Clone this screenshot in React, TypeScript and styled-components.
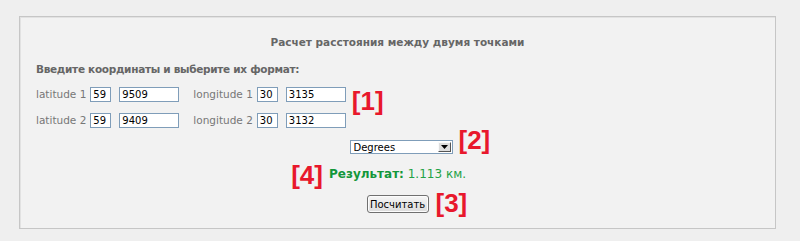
import React from 'react';
import styled, { createGlobalStyle } from 'styled-components';

const GlobalStyle = createGlobalStyle`
  body {
    margin: 0;
    background: #efefef;
    font-family: "DejaVu Sans", Verdana, sans-serif;
  }
`;

const Page = styled.div`
  padding: 16px 0 0 19px;
`;

const Panel = styled.div`
  box-sizing: border-box;
  width: 757px;
  height: 213px;
  border: 1px solid #c6c6c6;
  box-shadow: inset 1px 1px 0 #e2e2e2;
  background: #f2f2f2;
  padding: 18px 16px 0 16px;
  display: flex;
  flex-direction: column;
`;

const Title = styled.div`
  text-align: center;
  font-size: 10.5px;
  line-height: 14px;
  font-weight: bold;
  color: #666;
`;

const Heading = styled.div`
  margin-top: 13px;
  font-size: 10.5px;
  letter-spacing: -0.3px;
  line-height: 14px;
  font-weight: bold;
  color: #666;
`;

const Coords = styled.div`
  position: relative;
  align-self: flex-start;
  margin-top: 10px;
  display: flex;
  flex-direction: column;
  gap: 10px;
`;

const CoordRow = styled.div`
  display: flex;
  align-items: center;
  height: 16px;
`;

const Label = styled.span<{ $gap?: number }>`
  font-size: 10.5px;
  color: #777;
  margin-left: ${(p) => p.$gap ?? 0}px;
  margin-right: 4px;
  white-space: nowrap;
`;

const Field = styled.input<{ $w: number }>`
  box-sizing: border-box;
  width: ${(p) => p.$w}px;
  height: 15px;
  margin: 0 8px 0 0;
  padding: 0 2px;
  border: 1px solid #7f9db9;
  background: #fff;
  font-family: "DejaVu Sans", Verdana, sans-serif;
  font-size: 10px;
  color: #000;
  outline: none;
  &:last-child {
    margin-right: 0;
  }
`;

const CenterRow = styled.div<{ $top: number; $shift?: number }>`
  display: flex;
  justify-content: center;
  margin-top: ${(p) => p.$top}px;
  padding-left: ${(p) => p.$shift ?? 0}px;
`;

const Anchor = styled.div`
  position: relative;
  display: flex;
  align-items: center;
`;

const Mark = styled.span<{ $side: 'left' | 'right'; $gap: number; $top: number }>`
  position: absolute;
  top: ${(p) => p.$top}px;
  ${(p) => (p.$side === 'right' ? 'left' : 'right')}: calc(100% + ${(p) => p.$gap}px);
  font-family: "Liberation Sans", Arial, sans-serif;
  font-weight: bold;
  font-size: 26px;
  line-height: 26px;
  color: #e8182c;
  white-space: nowrap;
`;

const SelectBox = styled.div`
  box-sizing: border-box;
  width: 103px;
  height: 14px;
  border: 1px solid #7f9db9;
  background: #fff;
  display: flex;
  align-items: center;
  padding: 0 1px 0 3px;
  font-size: 10px;
  color: #000;
`;

const SelectArrow = styled.span`
  box-sizing: border-box;
  margin-left: auto;
  width: 13px;
  height: 10px;
  background: #dedede;
  border: 1px solid;
  border-color: #fafafa #555 #555 #fafafa;
  display: flex;
  align-items: center;
  justify-content: center;
`;

const Result = styled.div`
  font-size: 12px;
  line-height: 16px;
  color: #22a245;
  white-space: nowrap;
`;

const ResultLabel = styled.b`
  color: #12973a;
`;

const CalcButton = styled.button`
  box-sizing: border-box;
  width: 62px;
  height: 18px;
  padding: 0;
  border: 1px solid #707070;
  border-radius: 3px;
  background: linear-gradient(#f6f6f6, #dcdcdc);
  box-shadow: inset 0 0 0 1px #fcfcfc;
  font-family: "DejaVu Sans", Verdana, sans-serif;
  font-size: 10px;
  color: #000;
`;

const points = [
  { n: 1, lat: ['59', '9509'], lon: ['30', '3135'] },
  { n: 2, lat: ['59', '9409'], lon: ['30', '3132'] },
];

export default function App() {
  return (
    <>
      <GlobalStyle />
      <Page>
        <Panel>
          <Title>Расчет расстояния между двумя точками</Title>
          <Heading>Введите координаты и выберите их формат:</Heading>
          <Coords>
            {points.map((p) => (
              <CoordRow key={p.n}>
                <Label>latitude {p.n}</Label>
                <Field $w={21} defaultValue={p.lat[0]} />
                <Field $w={60} defaultValue={p.lat[1]} />
                <Label $gap={6}>longitude {p.n}</Label>
                <Field $w={21} defaultValue={p.lon[0]} />
                <Field $w={60} defaultValue={p.lon[1]} />
              </CoordRow>
            ))}
            <Mark $side="right" $gap={6} $top={2}>[1]</Mark>
          </Coords>
          <CenterRow $top={12} $shift={7}>
            <Anchor>
              <SelectBox>
                Degrees
                <SelectArrow>
                  <svg width="7" height="4" viewBox="0 0 7 4">
                    <path d="M0 0h7L3.5 4z" fill="#000" />
                  </svg>
                </SelectArrow>
              </SelectBox>
              <Mark $side="right" $gap={6} $top={-13}>[2]</Mark>
            </Anchor>
          </CenterRow>
          <CenterRow $top={12}>
            <Anchor>
              <Result>
                <ResultLabel>Результат:</ResultLabel> 1.113 км.
              </Result>
              <Mark $side="left" $gap={6} $top={-4}>[4]</Mark>
            </Anchor>
          </CenterRow>
          <CenterRow $top={13}>
            <Anchor>
              <CalcButton>Посчитать</CalcButton>
              <Mark $side="right" $gap={7} $top={-5}>[3]</Mark>
            </Anchor>
          </CenterRow>
        </Panel>
      </Page>
    </>
  );
}
